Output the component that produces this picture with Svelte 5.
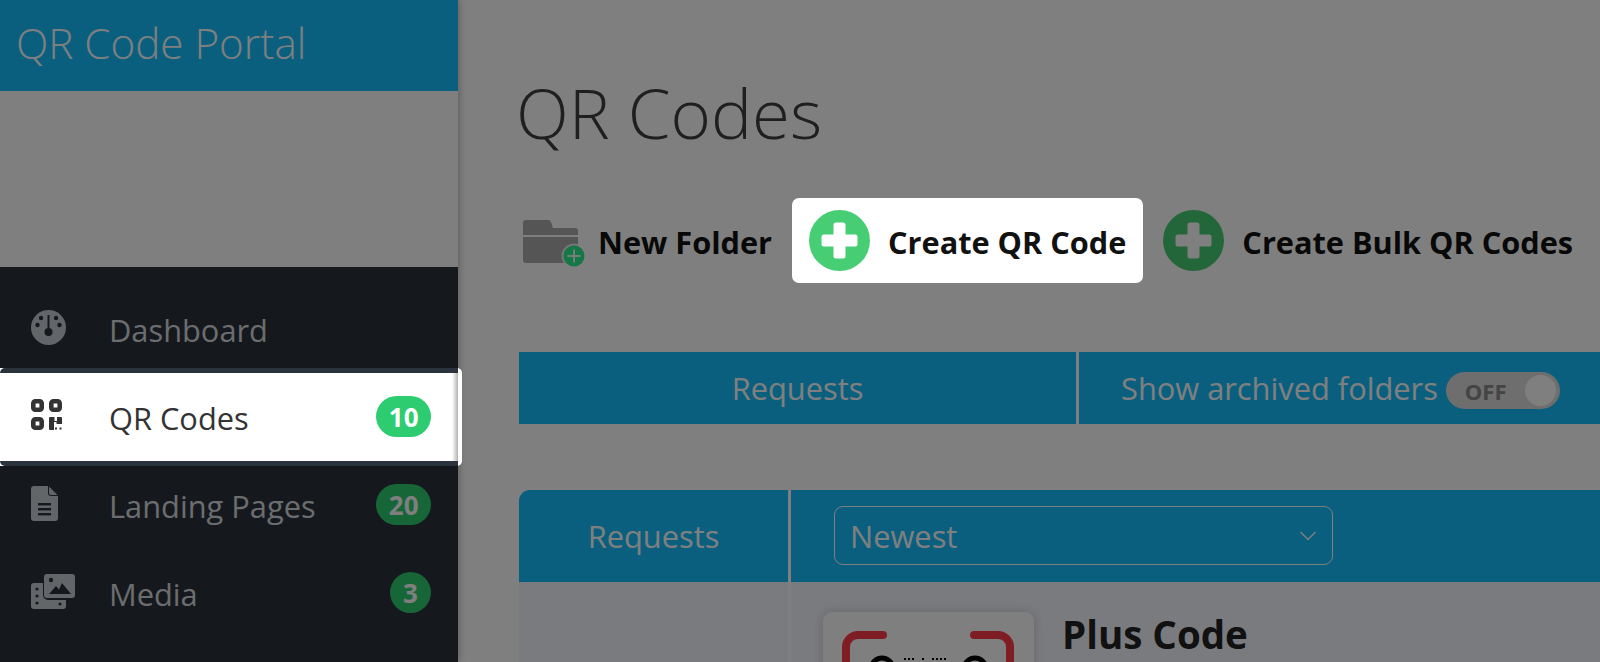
<script>
  const navItems = [
    { label: 'Dashboard', icon: 'gauge' },
    { label: 'QR Codes', icon: 'qr', badge: 10, active: true },
    { label: 'Landing Pages', icon: 'file', badge: 20 },
    { label: 'Media', icon: 'media', badge: 3 },
  ]
</script>

{#snippet plusCircle()}
  <svg class="plus-circle" viewBox="0 0 61 61" aria-hidden="true">
    <circle cx="30.5" cy="30.5" r="30.5" fill="#47cd74" />
    <path d="M27 12.500h7a2.500 2.500 0 0 1 2.500 2.500v9.500H46a2.500 2.500 0 0 1 2.500 2.500v7a2.500 2.500 0 0 1-2.500 2.500h-9.500V46a2.500 2.500 0 0 1-2.500 2.500h-7a2.500 2.500 0 0 1-2.500-2.500v-9.500H15a2.500 2.500 0 0 1-2.500-2.500v-7a2.500 2.500 0 0 1 2.500-2.500h9.500V15a2.500 2.500 0 0 1 2.500-2.500z" fill="#fff" />
  </svg>
{/snippet}

{#snippet navIcon(name)}
  {#if name === 'gauge'}
    <svg class="nav-icon" width="35" height="35" viewBox="0 0 35 35">
      <circle cx="17.5" cy="17.5" r="17.5" fill="currentColor" />
      <circle cx="17.5" cy="22" r="4" fill="#2a323c" />
      <rect x="16.5" y="5" width="2" height="17" fill="#2a323c" />
      <circle cx="10" cy="8" r="2.2" fill="#2a323c" />
      <circle cx="25" cy="8" r="2.2" fill="#2a323c" />
      <circle cx="6.5" cy="15" r="2.2" fill="#2a323c" />
      <circle cx="28.5" cy="15" r="2.2" fill="#2a323c" />
    </svg>
  {:else if name === 'qr'}
    <svg class="nav-icon" width="31" height="31" viewBox="0 0 31 31">
      <g fill="none" stroke="currentColor" stroke-width="4.600">
        <rect x="2.300" y="2.300" width="8.400" height="8.400" rx="2" />
        <rect x="20.300" y="2.300" width="8.400" height="8.400" rx="2" />
        <rect x="2.300" y="20.300" width="8.400" height="8.400" rx="2" />
      </g>
      <path d="M18 19a1 1 0 0 1 1-1h4.500v4h2.500v-4h4a1 1 0 0 1 1 1v6h-5.500v-2H23v8h-4a1 1 0 0 1-1-1z" fill="currentColor" />
      <g fill="currentColor">
        <rect x="24" y="28.500" width="2" height="2" />
        <rect x="28.500" y="28.500" width="2" height="2" />
      </g>
    </svg>
  {:else if name === 'file'}
    <svg class="nav-icon" width="27" height="35" viewBox="0 0 27 35">
      <path d="M3 0h14v7a3 3 0 0 0 3 3h7v22a3 3 0 0 1-3 3H3a3 3 0 0 1-3-3V3a3 3 0 0 1 3-3z" fill="currentColor" />
      <path d="M18 .5 26.5 9H20a2 2 0 0 1-2-2z" fill="currentColor" />
      <g fill="#2a323c">
        <rect x="7" y="17" width="13" height="2.4" />
        <rect x="7" y="22" width="13" height="2.4" />
        <rect x="7" y="27" width="13" height="2.4" />
      </g>
    </svg>
  {:else}
    <svg class="nav-icon" width="44" height="35" viewBox="0 0 44 35">
      <path d="M3 9h9v12a5 5 0 0 0 5 5h18v6a3 3 0 0 1-3 3H3a3 3 0 0 1-3-3V12a3 3 0 0 1 3-3z" fill="currentColor" />
      <g fill="#2a323c">
        <circle cx="6" cy="15" r="1.6" />
        <circle cx="6" cy="22" r="1.6" />
        <circle cx="6" cy="29" r="1.6" />
        <circle cx="29" cy="30" r="1.6" />
      </g>
      <rect x="13" y="0" width="31" height="24" rx="3" fill="currentColor" />
      <circle cx="20" cy="6" r="2.2" fill="#2a323c" />
      <path d="M18 20 25 12l3 3.5 3-6.5 9 11z" fill="#2a323c" />
    </svg>
  {/if}
{/snippet}

<div class="page">
  <aside class="sidebar">
    <div class="brand">QR Code Portal</div>
    <div class="logo-area"></div>
    <nav class="nav">
      {#each navItems as item}
        {#if item.active}
          <div class="helper">
            <div class="band">
              <a class="nav-item active" href="#qr">
                {@render navIcon(item.icon)}
                <span class="nav-label">{item.label}</span>
                <span class="badge">{item.badge}</span>
              </a>
            </div>
          </div>
        {:else}
          <a class="nav-item" href="#item">
            {@render navIcon(item.icon)}
            <span class="nav-label">{item.label}</span>
            {#if item.badge}<span class="badge">{item.badge}</span>{/if}
          </a>
        {/if}
      {/each}
    </nav>
  </aside>

  <main class="main">
    <h1>QR Codes</h1>

    <div class="actions">
      <button class="action">
        <svg class="folder" width="64" height="54" viewBox="0 0 64 54" aria-hidden="true">
          <path d="M3 0h22a3 3 0 0 1 3 2l2 6h22a3 3 0 0 1 3 3v4H0V3a3 3 0 0 1 3-3z" fill="#aaa" />
          <path d="M0 17h55v23a3 3 0 0 1-3 3H3a3 3 0 0 1-3-3z" fill="#aaa" />
          <circle cx="51" cy="36" r="12.5" fill="#fff" opacity=".75" />
          <circle cx="51" cy="36" r="10.5" fill="#27f08a" />
          <path d="M51 29.5v13M44.5 36h13" stroke="#fff" stroke-width="2" opacity=".9" />
        </svg>
        <span>New Folder</span>
      </button>
      <button class="action highlighted">
        {@render plusCircle()}
        <span>Create QR Code</span>
      </button>
      <button class="action">
        {@render plusCircle()}
        <span>Create Bulk QR Codes</span>
      </button>
    </div>

    <div class="tabs">
      <div class="tab requests">Requests</div>
      <div class="tab archived">
        <span>Show archived folders</span>
        <span class="toggle"><span class="toggle-text">OFF</span><span class="knob"></span></span>
      </div>
    </div>

    <section class="panel">
      <div class="panel-left">
        <div class="panel-title">Requests</div>
      </div>
      <div class="panel-right">
        <div class="panel-head">
          <div class="select">
            <span>Newest</span>
            <svg width="18" height="10" viewBox="0 0 18 10" fill="none" stroke="currentColor" stroke-width="1.4"><path d="M1.5 1 9 8.5 16.500 1" /></svg>
          </div>
        </div>
        <div class="panel-body">
          <div class="qr-card">
            <svg width="172" height="40" viewBox="0 0 172 40" aria-hidden="true">
              <path d="M41 4H16A12 12 0 0 0 4 16v24M132 4h24a12 12 0 0 1 12 12v24" fill="none" stroke="#ff3a48" stroke-width="8" stroke-linecap="round" />
              <circle cx="40" cy="38" r="11" fill="none" stroke="#000" stroke-width="5" />
              <circle cx="133" cy="38" r="11" fill="none" stroke="#000" stroke-width="5" />
              <g fill="#000">
                <rect x="62" y="27" width="2" height="2" /><rect x="66" y="27" width="2" height="2" /><rect x="70" y="27" width="2" height="2" />
                <rect x="80" y="27" width="2" height="2" /><rect x="90" y="27" width="2" height="2" /><rect x="94" y="27" width="2" height="2" />
                <rect x="98" y="27" width="2" height="2" /><rect x="102" y="27" width="2" height="2" />
              </g>
            </svg>
          </div>
          <div class="card-title">Plus Code</div>
        </div>
      </div>
    </section>
  </main>

  <div class="overlay"></div>
</div>

<style>
  :global(body) { background: #fff; }
  .page {
    display: flex; height: 662px; overflow: hidden;
    background: #fff; font-family: "Open Sans", sans-serif; color: #3f3f3f;
  }

  /* sidebar */
  .sidebar {
    position: relative; flex: 0 0 458px; width: 458px;
    display: flex; flex-direction: column; background: #fff;
    box-shadow: 0 0 8px rgba(0,0,0,0.35);
  }
  .brand {
    height: 91px; padding: 0 0 6px 16px; box-sizing: border-box;
    display: flex; align-items: center;
    background: #14beff; color: #fff;
    font-size: 42.2px; font-weight: 300;
  }
  .logo-area { height: 176px; background: #fff; }
  .nav {
    flex: 1; padding-top: 18px;
    background: #2a323c; color: #d6dade;
  }
  .nav-item {
    position: relative;
    display: flex; align-items: center; height: 88px; box-sizing: border-box;
    padding: 0 27px 0 31px;
    color: inherit; text-decoration: none; font-size: 30.8px;
  }
  .nav-icon { flex: none; color: #c6ccd2; margin-top: -4px; }
  .nav-label { position: absolute; left: 109px; top: 24px; }
  .badge {
    margin-left: auto; min-width: 41px; height: 41px; box-sizing: border-box;
    padding: 0 12.5px; border-radius: 21px;
    display: flex; align-items: center; justify-content: center;
    background: #2ecc71; color: #fff; font-size: 26px; font-weight: 700;
    margin-top: -1px;
  }
  .helper {
    position: relative; z-index: 11; width: 462px; margin: -5px 0;
    background: #fff; border-radius: 0 5px 5px 0;
  }
  .band { width: 458px; padding: 5px 0; background: #2a323c; border-radius: 5px 0 0 5px; }
  .nav-item.active {
    background: #fff linear-gradient(to left, rgba(0,0,0,0.3), transparent 6px);
    color: #333;
  }
  .nav-item.active .nav-icon { color: #333; margin-top: -6px; }

  /* main column */
  .main { flex: 1; min-width: 0; padding: 0 0 0 61px; }
  h1 {
    margin: 71px 0 0 -3px; font-size: 69px; line-height: 82px;
    font-weight: 300; color: #3f3f3f;
  }
  .actions { display: flex; gap: 3px; margin: 45px 0 0 -13px; }
  .action {
    display: flex; align-items: center; gap: 18px; height: 85px;
    padding: 0 17px; border: 0; background: none; border-radius: 7px;
    font: 700 30.7px "Open Sans", sans-serif; color: #111; white-space: nowrap;
  }
  .action span { position: relative; top: 1px; }
  .action.highlighted { position: relative; z-index: 11; background: #fff; }
  .plus-circle { width: 61px; height: 61px; flex: none; }
  .folder { margin-top: 12px; margin-right: -7px; flex: none; }

  .tabs { display: flex; gap: 3px; margin-top: 69px; height: 72px; }
  .tab {
    display: flex; align-items: center; background: #14beff; color: #fff;
    font-size: 30.8px;
  }
  .requests { flex: 0 0 557px; justify-content: center; }
  .archived { flex: 1; padding-left: 42px; gap: 8px; white-space: nowrap; }
  .toggle {
    width: 114px; height: 37px; border-radius: 19px; background: #dcdcdc;
    display: flex; align-items: center; justify-content: space-between;
    padding: 0 4px 0 19px; box-sizing: border-box; margin-top: 5px;
  }
  .toggle-text { font-size: 22px; font-weight: 700; color: #888; }
  .knob { width: 31px; height: 31px; border-radius: 50%; background: #fff; }

  .panel { display: flex; gap: 3px; margin-top: 66px; background: #fff; }
  .panel-left { flex: 0 0 269px; background: #f5f7fe; height: 300px; border-top-left-radius: 11px; overflow: hidden; }
  .panel-title {
    height: 92px; display: flex; align-items: center; justify-content: center;
    background: #14beff; color: #fff; font-size: 30.8px;
  }
  .panel-right { flex: 1; background: #f5f7fe; }
  .panel-head { height: 92px; padding: 16px 0 0 43px; box-sizing: border-box; background: #14beff; }
  .select {
    width: 499px; height: 59px; box-sizing: border-box;
    padding: 0 15px 0 15px; border: 1.5px solid #fff; border-radius: 9px;
    display: flex; align-items: center; justify-content: space-between;
    color: #fff; font-size: 30.8px;
  }
  .panel-body { display: flex; padding: 30px 0 0 32px; gap: 28px; }
  .qr-card {
    flex: none; width: 211px; height: 220px; padding: 19px 0 0 19px; box-sizing: border-box;
    background: #fff; border-radius: 9px; box-shadow: 0 0 12px rgba(0,0,0,0.18);
  }
  .qr-card svg { display: block; }
  .card-title { font-size: 38.5px; font-weight: 700; color: #222; line-height: 46px; margin-top: -1px; }

  .overlay {
    position: fixed; inset: 0; z-index: 10;
    background: rgba(0,0,0,0.5);
  }
</style>
